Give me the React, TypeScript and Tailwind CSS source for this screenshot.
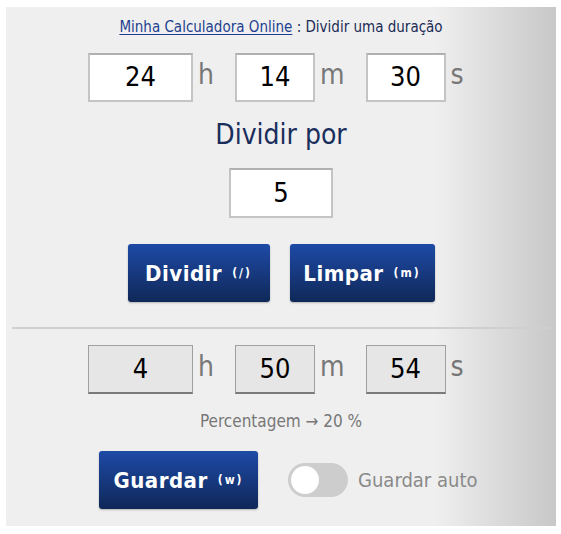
import React from 'react';

const font = "font-['DejaVu_Sans_Condensed','Liberation_Sans_Narrow',sans-serif]";

const TimeBox: React.FC<{ value: string; width: string; result?: boolean }> = ({ value, width, result }) => (
  <div
    className={`${width} h-[49px] flex items-center justify-center text-[27px] text-black ${
      result
        ? 'bg-[#e6e6e6] border border-[#a0a0a0] border-b-2 border-b-[#7a7a7a]'
        : 'bg-white border-2 border-[#c4c4c4] border-t-[#b0b0b0]'
    }`}
  >
    {value}
  </div>
);

const Unit: React.FC<{ label: string; last?: boolean }> = ({ label, last }) => (
  <span className={`ml-[5px] ${last ? '' : 'mr-[21px]'} text-[28px] leading-none text-[#777] -mt-[6px]`}>{label}</span>
);

const TimeRow: React.FC<{ h: string; m: string; s: string; result?: boolean }> = ({ h, m, s, result }) => (
  <div className="flex items-center pl-[82px]">
    <TimeBox value={h} width="w-[105px]" result={result} />
    <Unit label="h" />
    <TimeBox value={m} width="w-[80px]" result={result} />
    <Unit label="m" />
    <TimeBox value={s} width="w-[80px]" result={result} />
    <Unit label="s" last />
  </div>
);

const BlueButton: React.FC<{ label: string; hint: string; width: string }> = ({ label, hint, width }) => (
  <button
    className={`${width} h-[58px] rounded-[3px] bg-[linear-gradient(to_bottom,#1e4aa6,#0f2858)] text-white flex items-center justify-center gap-[10px] shadow-[0_1px_2px_rgba(0,0,0,0.25)]`}
  >
    <span className="text-[22px] font-bold tracking-[0.5px]">{label}</span>
    <span className="text-[12px] font-bold tracking-[2px]">{hint}</span>
  </button>
);

export default function App() {
  return (
    <div className={`w-full min-h-screen bg-white pt-[7px] pl-[6px] ${font}`}>
      <div className="w-[550px] h-[519px] bg-[linear-gradient(to_right,#efefef_78%,#c8c8c8)] flex flex-col">
        <div className="pt-[12px] text-center text-[15px] leading-[16px] text-[#1b2b55]">
          <a href="#" className="text-[#1d3f8f] underline underline-offset-2">Minha Calculadora Online</a>
          <span> : Dividir uma duração</span>
        </div>

        <div className="mt-[18px]">
          <TimeRow h="24" m="14" s="30" />
        </div>

        <div className="mt-[16px] text-center text-[28px] leading-[34px] text-[#1a2e5c]">Dividir por</div>

        <div className="mt-[16px] flex justify-center">
          <div className="w-[104px] h-[50px] bg-white border-2 border-[#c4c4c4] border-t-[#b0b0b0] flex items-center justify-center text-[27px] text-black">
            5
          </div>
        </div>

        <div className="mt-[26px] flex justify-center gap-[20px]">
          <BlueButton label="Dividir" hint="(/)" width="w-[142px]" />
          <BlueButton label="Limpar" hint="(m)" width="w-[145px]" />
        </div>

        <div className="mt-[25px] mx-[6px] h-[2px] bg-[#cfcfcf]" />

        <div className="mt-[16px]">
          <TimeRow h="4" m="50" s="54" result />
        </div>

        <div className="mt-[17px] text-center text-[17px] leading-[20px] text-[#777]">Percentagem → 20 %</div>

        <div className="mt-[20px] flex items-center pl-[93px]">
          <BlueButton label="Guardar" hint="(w)" width="w-[159px]" />
          <div className="ml-[30px] w-[60px] h-[34px] rounded-full bg-[#cdcdcd] flex items-center px-[3px]">
            <div className="w-[28px] h-[28px] rounded-full bg-white" />
          </div>
          <span className="ml-[10px] text-[20px] text-[#8a8a8a]">Guardar auto</span>
        </div>
      </div>
    </div>
  );
}
